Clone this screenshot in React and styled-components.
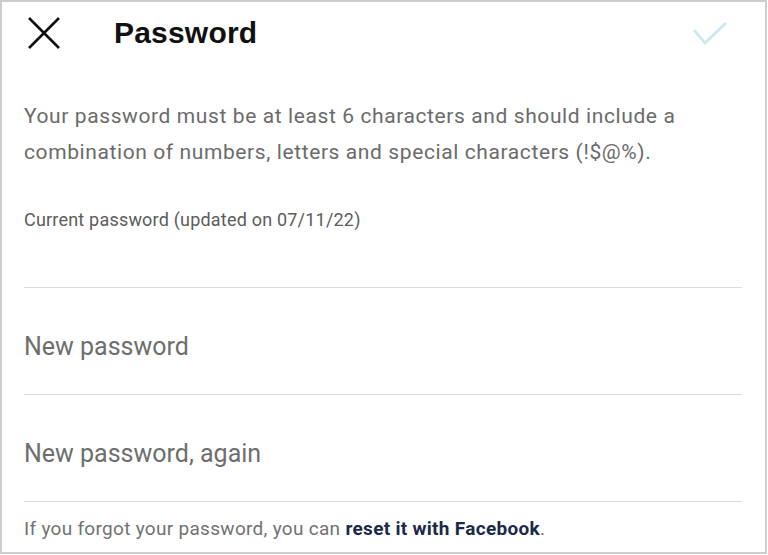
import styled, { createGlobalStyle } from "styled-components";

const Global = createGlobalStyle`
  html, body {
    margin: 0;
    padding: 0;
    background: #ffffff;
  }
  * {
    box-sizing: border-box;
  }
`;

const Frame = styled.div`
  width: 767px;
  height: 554px;
  border: 2px solid #cdcdcd;
  background: #ffffff;
  font-family: Roboto, "Noto Sans", sans-serif;
  display: flex;
  flex-direction: column;
  overflow: hidden;
`;

const Header = styled.header`
  height: 62px;
  display: flex;
  align-items: center;
  padding: 0 37px 0 25px;
`;

const IconButton = styled.button`
  border: 0;
  background: none;
  padding: 0;
  display: flex;
  align-items: center;
  justify-content: center;
  cursor: pointer;
`;

const Title = styled.h1`
  margin: 0 0 0 53px;
  flex: 1;
  font-family: "Liberation Sans", Arial, sans-serif;
  font-weight: 700;
  font-size: 30px;
  color: #111111;
  letter-spacing: 0.2px;
`;

const Body = styled.main`
  padding: 0 23px 0 22px;
  display: flex;
  flex-direction: column;
`;

const Description = styled.p`
  margin: 34px 0 0;
  font-size: 21px;
  line-height: 36px;
  letter-spacing: 0.6px;
  color: #6b6b6b;
`;

const FieldLabel = styled.label`
  margin-top: 40px;
  font-size: 18px;
  line-height: 20px;
  letter-spacing: 0.2px;
  color: #5c5c5c;
`;

const Field = styled.div`
  border-bottom: 1px solid #dcdcdc;
  padding: ${(p) => (p.$compact ? "0" : "45px 0 33px")};
  height: ${(p) => (p.$compact ? "58px" : "auto")};
`;

const Input = styled.input`
  width: 100%;
  border: 0;
  outline: none;
  padding: 0;
  font-family: Roboto, "Noto Sans", sans-serif;
  font-size: 25px;
  line-height: 28px;
  height: 28px;
  color: #333;
  background: transparent;

  &::placeholder {
    color: #6e6e6e;
  }
`;

const Footer = styled.p`
  margin: 0;
  padding-top: 17px;
  font-size: 19px;
  line-height: 20px;
  letter-spacing: 0.3px;
  color: #727272;
`;

const ResetLink = styled.a`
  color: #1b2a48;
  font-weight: 700;
  text-decoration: none;
`;

const CloseIcon = () => (
  <svg width="34" height="34" viewBox="0 0 34 34">
    <path d="M2 2 L32 32 M32 2 L2 32" stroke="#111" strokeWidth="2.6" fill="none" />
  </svg>
);

const CheckIcon = () => (
  <svg width="36" height="25" viewBox="0 0 36 25">
    <path d="M2 9 L13 22 L34 2" stroke="#c8e7ee" strokeWidth="2.6" fill="none" />
  </svg>
);

export default function App() {
  return (
    <>
      <Global />
      <Frame>
        <Header>
          <IconButton aria-label="Close">
            <CloseIcon />
          </IconButton>
          <Title>Password</Title>
          <IconButton aria-label="Save">
            <CheckIcon />
          </IconButton>
        </Header>
        <Body>
          <Description>
            Your password must be at least 6 characters and should include a
            <br />
            combination of numbers, letters and special characters (!$@%).
          </Description>
          <FieldLabel>Current password (updated on 07/11/22)</FieldLabel>
          <Field $compact>
            <Input type="password" />
          </Field>
          <Field>
            <Input type="password" placeholder="New password" />
          </Field>
          <Field>
            <Input type="password" placeholder="New password, again" />
          </Field>
          <Footer>
            If you forgot your password, you can{" "}
            <ResetLink href="#">reset it with Facebook</ResetLink>.
          </Footer>
        </Body>
      </Frame>
    </>
  );
}
